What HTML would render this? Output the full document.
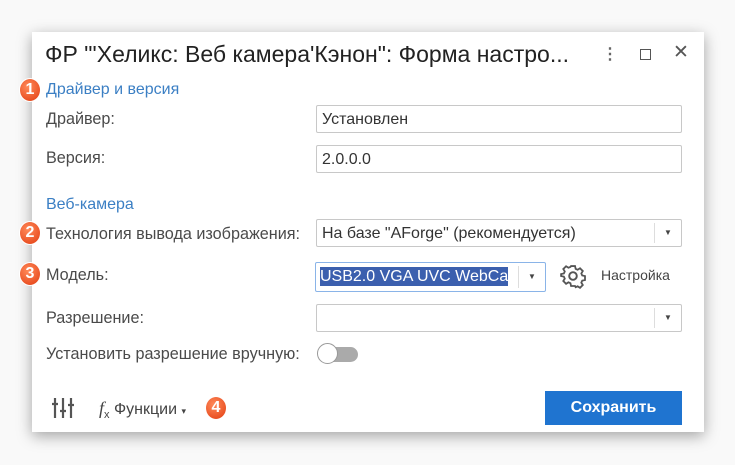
<!DOCTYPE html><html><head><meta charset="utf-8"><style>
body{margin:0;width:735px;height:465px;background:#f9f9f9;font-family:"Liberation Sans",sans-serif;position:relative;overflow:hidden}
.dlg{position:absolute;left:32px;top:32px;width:672px;height:400px;background:#fff;box-shadow:0 4px 14px rgba(0,0,0,.35)}
.a{position:absolute;white-space:nowrap}
.t{font-size:23px;color:#222;left:45px;top:41px;letter-spacing:0px}
.h{font-size:16px;color:#3b7fc4}
.l{font-size:16.2px;color:#4a4a4a}
.in{position:absolute;border:1px solid #c8c8c8;border-radius:2px;background:#fff;font-size:16px;color:#333;box-sizing:border-box;padding-left:5px}
.dd{position:absolute;right:0;top:3px;bottom:3px;width:26px;border-left:1px solid #ddd;font-size:8px;color:#444;text-align:center}
.b{position:absolute;width:20px;height:22px;border-radius:50%;background:radial-gradient(circle at 40% 35%,#ff8a5a,#e23c10);color:#fff;font-weight:bold;font-size:16px;text-align:center;line-height:22px;box-shadow:0 0 0 1px #fff}
</style></head><body>
<div class="dlg"></div>
<div class="a t">ФР "'Хеликс: Веб камера'Кэнон": Форма настро...</div>
<div class="a" style="left:602px;top:44px;font-size:16px;color:#666;font-weight:bold">⋮</div>
<div class="a" style="left:640px;top:49px;width:9px;height:9px;border:1.5px solid #555"></div>
<div class="a" style="left:673px;top:41px;font-size:19px;color:#555">✕</div>
<div class="b" style="left:20px;top:79px">1</div>
<div class="a h" style="left:46px;top:81px">Драйвер и версия</div>
<div class="a l" style="left:46px;top:110px">Драйвер:</div>
<div class="in" style="left:316px;top:105px;width:366px;height:28px;line-height:27px">Установлен</div>
<div class="a l" style="left:46px;top:149px">Версия:</div>
<div class="in" style="left:316px;top:145px;width:366px;height:28px;line-height:27px">2.0.0.0</div>
<div class="a h" style="left:46px;top:196px">Веб-камера</div>
<div class="b" style="left:20px;top:222px">2</div>
<div class="a l" style="left:46px;top:225px">Технология вывода изображения:</div>
<div class="in" style="left:316px;top:219px;width:366px;height:28px;line-height:27px">На базе "AForge" (рекомендуется)<div class="dd" style="line-height:20px">▼</div></div>
<div class="b" style="left:20px;top:263px">3</div>
<div class="a l" style="left:46px;top:266px">Модель:</div>
<div class="in" style="left:315px;top:262px;width:231px;height:30px;line-height:28px;border:1px solid #8ab4e8;padding-left:4px;overflow:hidden"><span style="background:#3b5fae;color:#fff;padding:1px 0">USB2.0 VGA UVC WebCa</span><div class="dd" style="line-height:22px;background:#fff">▼</div></div>
<svg class="a" style="left:560px;top:263px" width="26" height="26" viewBox="0 0 24 24"><path d="M10 2h4l.6 2.8 2 .9 2.4-1.5 2.8 2.8-1.5 2.4.9 2 2.8.6v4l-2.8.6-.9 2 1.5 2.4-2.8 2.8-2.4-1.5-2 .9L14 22h-4l-.6-2.8-2-.9L5 19.8 2.2 17l1.5-2.4-.9-2L0 12v0-2l2.8-.6.9-2L2.2 5 5 2.2l2.4 1.5 2-.9z" fill="none" stroke="#555" stroke-width="1.8" transform="translate(1 1) scale(.92)"/><circle cx="12" cy="12" r="3.5" fill="none" stroke="#555" stroke-width="1.8"/></svg>
<div class="a" style="left:601px;top:267px;font-size:14px;color:#444">Настройка</div>
<div class="a l" style="left:46px;top:309px">Разрешение:</div>
<div class="in" style="left:316px;top:304px;width:366px;height:28px"><div class="dd" style="line-height:20px">▼</div></div>
<div class="a l" style="left:46px;top:345px">Установить разрешение вручную:</div>
<div class="a" style="left:320px;top:347px;width:38px;height:15px;border-radius:8px;background:#aaa"></div>
<div class="a" style="left:317px;top:343px;width:21px;height:21px;border-radius:50%;background:#fff;border:1px solid #999;box-sizing:border-box"></div>
<svg class="a" style="left:51px;top:396px" width="24" height="24" viewBox="0 0 24 24" stroke="#555" stroke-width="2.2"><path d="M4 2v20M12 2v20M20 2v20M1 8h6M9 15h6M17 9h6"/></svg>
<div class="a" style="left:99px;top:398px;font-size:16px;color:#444"><i style="font-family:'Liberation Serif';font-size:18px">f</i><sub style="font-size:11px">x</sub> Функции <span style="font-size:9px">▾</span></div>
<div class="b" style="left:206px;top:397px">4</div>
<div class="a" style="left:545px;top:391px;width:137px;height:34px;background:#1f74d0;color:#fff;font-weight:bold;font-size:16px;text-align:center;line-height:34px">Сохранить</div>
</body></html>
